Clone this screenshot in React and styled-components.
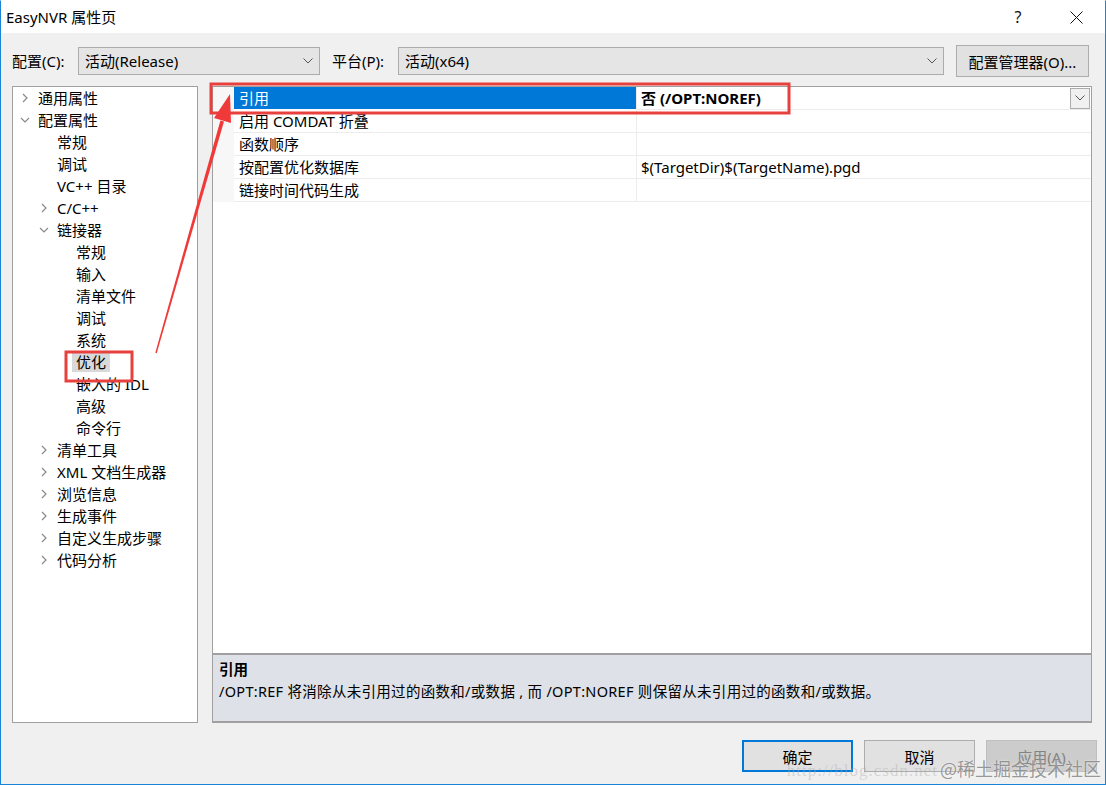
import React from "react";
import styled, { createGlobalStyle, css } from "styled-components";

const GlobalStyle = createGlobalStyle`
  html, body {
    margin: 0;
    padding: 0;
    background: #f0f0f0;
  }
  * {
    box-sizing: border-box;
  }
  body {
    font-family: "Noto Sans", "Noto Sans CJK SC", sans-serif;
    color: #000;
  }
`;

const treeItems = [
  { label: "通用属性", level: 0, arrow: "right" },
  { label: "配置属性", level: 0, arrow: "down" },
  { label: "常规", level: 1 },
  { label: "调试", level: 1 },
  { label: "VC++ 目录", level: 1 },
  { label: "C/C++", level: 1, arrow: "right" },
  { label: "链接器", level: 1, arrow: "down" },
  { label: "常规", level: 2 },
  { label: "输入", level: 2 },
  { label: "清单文件", level: 2 },
  { label: "调试", level: 2 },
  { label: "系统", level: 2 },
  { label: "优化", level: 2, selected: true },
  { label: "嵌入的 IDL", level: 2 },
  { label: "高级", level: 2 },
  { label: "命令行", level: 2 },
  { label: "清单工具", level: 1, arrow: "right" },
  { label: "XML 文档生成器", level: 1, arrow: "right" },
  { label: "浏览信息", level: 1, arrow: "right" },
  { label: "生成事件", level: 1, arrow: "right" },
  { label: "自定义生成步骤", level: 1, arrow: "right" },
  { label: "代码分析", level: 1, arrow: "right" },
];

const properties = [
  { name: "引用", value: "否 (/OPT:NOREF)", selected: true },
  { name: "启用 COMDAT 折叠", value: "" },
  { name: "函数顺序", value: "" },
  { name: "按配置优化数据库", value: "$(TargetDir)$(TargetName).pgd" },
  { name: "链接时间代码生成", value: "" },
];

const Window = styled.div`
  position: relative;
  width: 1106px;
  height: 785px;
  display: flex;
  flex-direction: column;
  background: #f0f0f0;
  border: 1px solid #1883d7;
  border-top-color: #ffffff;
  overflow: hidden;
`;

const TitleBar = styled.div`
  height: 32px;
  background: #ffffff;
  display: flex;
  align-items: center;
  padding-left: 5px;
  font-size: 15px;
`;

const TitleText = styled.div`
  flex: 1;
  line-height: 20px;
`;

const TitleButton = styled.div`
  width: 58px;
  height: 32px;
  display: flex;
  align-items: center;
  justify-content: center;
  font-size: 16px;
  color: #111;
`;

const Toolbar = styled.div`
  margin-top: 12px;
  height: 32px;
  padding: 0 11px;
  display: flex;
  align-items: center;
`;

const Label = styled.div`
  width: 66px;
  font-size: 15px;
  line-height: 20px;
`;

const Combo = styled.div`
  width: ${(p) => p.width}px;
  height: 28px;
  margin-right: ${(p) => p.gap || 0}px;
  background: #e5e5e5;
  border: 1px solid #acacac;
  display: flex;
  align-items: center;
  padding: 0 6px;
  font-size: 15px;
`;

const ComboText = styled.div`
  flex: 1;
  line-height: 20px;
`;

const Button = styled.div`
  width: ${(p) => p.width || 111}px;
  height: 32px;
  display: flex;
  align-items: center;
  justify-content: center;
  background: #e1e1e1;
  border: 1px solid #adadad;
  font-size: 15px;
  color: #000;
  ${(p) =>
    p.primary &&
    css`
      border: 2px solid #0078d7;
    `}
  ${(p) =>
    p.disabled &&
    css`
      background: #cccccc;
      border-color: #bfbfbf;
      color: #838383;
    `}
`;

const Main = styled.div`
  margin-top: 9px;
  height: 637px;
  padding: 0 0 0 11px;
  display: flex;
  gap: 14px;
`;

const Tree = styled.div`
  width: 186px;
  background: #ffffff;
  border: 1px solid #a0a0a0;
`;

const TreeRow = styled.div`
  height: 22px;
  display: flex;
  align-items: center;
  padding-left: ${(p) => 3 + p.level * 19}px;
  font-size: 15px;
`;

const Expander = styled.div`
  width: 22px;
  height: 22px;
  padding-right: 4px;
  display: flex;
  align-items: center;
  justify-content: center;
`;

const TreeLabel = styled.div`
  line-height: 20px;
  padding: 0 4px;
  margin-left: -4px;
  white-space: nowrap;
  background: ${(p) => (p.selected ? "#d9d9d9" : "transparent")};
`;

const RightPane = styled.div`
  width: 880px;
  display: flex;
  flex-direction: column;
`;

const Grid = styled.div`
  flex: 1;
  background: #ffffff;
  border: 1px solid #a0a0a0;
  border-bottom: 2px solid #a0a0a0;
`;

const PropRow = styled.div`
  height: 23px;
  display: flex;
  font-size: 15px;
`;

const Gutter = styled.div`
  width: 21px;
  background: #f7f7f7;
`;

const NameCell = styled.div`
  width: 403px;
  padding-left: 5px;
  display: flex;
  align-items: center;
  border-bottom: 1px solid #ececec;
  border-right: 1px solid #ececec;
  line-height: 20px;
  ${(p) =>
    p.selected &&
    css`
      background: #0078d7;
      color: #ffffff;
      border-bottom-color: #ffffff;
    `}
`;

const ValueCell = styled.div`
  flex: 1;
  padding-left: 4px;
  display: flex;
  align-items: center;
  border-bottom: 1px solid #ececec;
  line-height: 20px;
  font-weight: ${(p) => (p.bold ? 700 : 400)};
`;

const ValueText = styled.div`
  flex: 1;
`;

const DropButton = styled.div`
  width: 20px;
  height: 21px;
  margin-right: 1px;
  background: #f0f0f0;
  border: 1px solid #acacac;
  display: flex;
  align-items: center;
  justify-content: center;
`;

const Description = styled.div`
  height: 68px;
  background: #dee1e7;
  border-left: 1px solid #a0a0a0;
  border-right: 1px solid #a0a0a0;
  border-bottom: 2px solid #a0a0a0;
  padding: 4px 6px;
  font-size: 14.5px;
`;

const DescTitle = styled.div`
  font-weight: 700;
  line-height: 20px;
`;

const DescText = styled.div`
  line-height: 24px;
  letter-spacing: 0.3px;
`;

const Footer = styled.div`
  margin-top: 17px;
  padding-right: 8px;
  display: flex;
  justify-content: flex-end;
  gap: 11px;
`;

const Overlay = styled.svg`
  position: absolute;
  left: -1px;
  top: 0;
  pointer-events: none;
`;

const Watermark = styled.div`
  position: absolute;
  right: 4px;
  bottom: 3px;
  display: flex;
  align-items: baseline;
  gap: 2px;
  pointer-events: none;
`;

const WatermarkUrl = styled.span`
  font-family: "Liberation Serif", serif;
  font-size: 17px;
  color: rgba(170, 170, 170, 0.4);
  letter-spacing: 1px;
`;

const WatermarkName = styled.span`
  font-family: "Noto Sans CJK SC", sans-serif;
  font-size: 18px;
  color: rgba(120, 120, 120, 0.75);
  text-shadow: 0 0 2px rgba(255, 255, 255, 0.8);
`;

function Chevron({ dir, color = "#8a8a8a", size = 8 }) {
  if (dir === "down") {
    return (
      <svg width={size + 2} height={size} viewBox="0 0 10 8">
        <path d="M1 2 L5 6 L9 2" fill="none" stroke={color} strokeWidth="1.2" />
      </svg>
    );
  }
  return (
    <svg width={size} height={size + 2} viewBox="0 0 8 10">
      <path d="M2 1 L6 5 L2 9" fill="none" stroke={color} strokeWidth="1.2" />
    </svg>
  );
}

function ComboArrow() {
  return (
    <svg width="10" height="6" viewBox="0 0 10 6">
      <path d="M0.5 0.5 L5 5 L9.5 0.5" fill="none" stroke="#555" strokeWidth="1" />
    </svg>
  );
}

export default function App() {
  return (
    <>
      <GlobalStyle />
      <Window>
        <TitleBar>
          <TitleText>EasyNVR 属性页</TitleText>
          <TitleButton>?</TitleButton>
          <TitleButton>
            <svg width="13" height="13" viewBox="0 0 13 13">
              <path d="M0.5 0.5 L12.5 12.5 M12.5 0.5 L0.5 12.5" stroke="#111" strokeWidth="1" />
            </svg>
          </TitleButton>
        </TitleBar>

        <Toolbar>
          <Label>配置(C):</Label>
          <Combo width={242} gap={12}>
            <ComboText>活动(Release)</ComboText>
            <ComboArrow />
          </Combo>
          <Label>平台(P):</Label>
          <Combo width={546} gap={12}>
            <ComboText>活动(x64)</ComboText>
            <ComboArrow />
          </Combo>
          <Button width={133}>配置管理器(O)...</Button>
        </Toolbar>

        <Main>
          <Tree>
            {treeItems.map((item, i) => (
              <TreeRow key={i} level={item.level}>
                <Expander>{item.arrow && <Chevron dir={item.arrow} />}</Expander>
                <TreeLabel selected={item.selected}>{item.label}</TreeLabel>
              </TreeRow>
            ))}
          </Tree>

          <RightPane>
            <Grid>
              {properties.map((p, i) => (
                <PropRow key={i}>
                  <Gutter />
                  <NameCell selected={p.selected}>{p.name}</NameCell>
                  <ValueCell bold={p.selected}>
                    <ValueText>{p.value}</ValueText>
                    {p.selected && (
                      <DropButton>
                        <ComboArrow />
                      </DropButton>
                    )}
                  </ValueCell>
                </PropRow>
              ))}
            </Grid>
            <Description>
              <DescTitle>引用</DescTitle>
              <DescText>
                /OPT:REF 将消除从未引用过的函数和/或数据 , 而 /OPT:NOREF 则保留从未引用过的函数和/或数据。
              </DescText>
            </Description>
          </RightPane>
        </Main>

        <Footer>
          <Button primary>确定</Button>
          <Button>取消</Button>
          <Button disabled>应用(A)</Button>
        </Footer>

        <Overlay width="1106" height="785" viewBox="0 0 1106 785">
          <rect x="211" y="83" width="578" height="29" fill="none" stroke="#e8403d" strokeWidth="3" />
          <rect x="66" y="351" width="66" height="29" fill="none" stroke="#e8403d" strokeWidth="3" />
          <polygon
            points="156.7,352.2 155.3,351.8 220.4,119.5 224,120.5"
            fill="#f03a3a"
          />
          <polygon points="230,93 231,122 214,117" fill="#f03a3a" />
        </Overlay>

        <Watermark>
          <WatermarkUrl>http://blog.csdn.net</WatermarkUrl>
          <WatermarkName>@稀土掘金技术社区</WatermarkName>
        </Watermark>
      </Window>
    </>
  );
}
